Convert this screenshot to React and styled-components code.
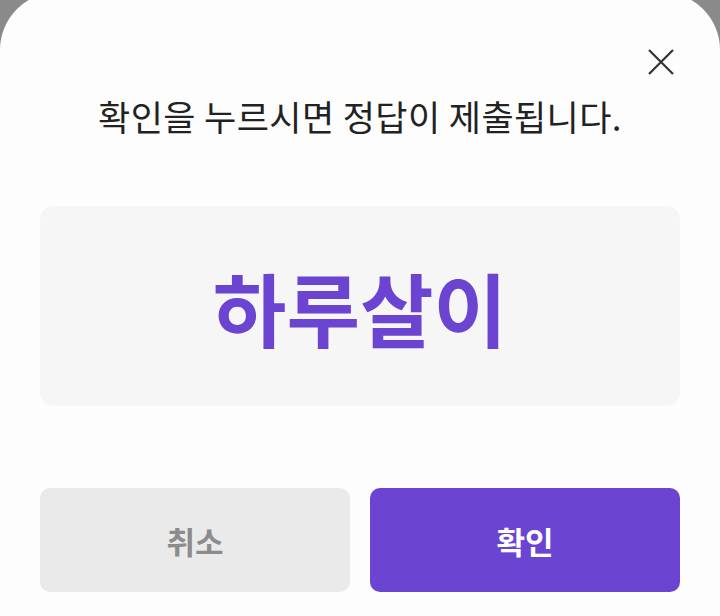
import styled, {createGlobalStyle} from 'styled-components'

const GlobalStyle = createGlobalStyle`
  html, body {
    margin: 0;
    padding: 0;
    background: #8a8a8a;
    overflow: hidden;
  }
  * { box-sizing: border-box; }
`;

const Sheet = styled.div`
  margin-top: -8px;
  min-height: calc(100vh + 8px);
  background: #fdfdfd;
  border-radius: 58px 58px 0 0;
  padding: 57px 40px 24px;
  display: flex;
  flex-direction: column;
  font-family: "Noto Sans CJK KR", "Noto Sans", sans-serif;
`;

const TopBar = styled.div`
  display: flex;
  justify-content: flex-end;
  padding-right: 6px;
  height: 26px;
`;

const CloseButton = styled.button`
  width: 26px;
  height: 26px;
  padding: 0;
  border: 0;
  background: none;
  cursor: pointer;
  display: flex;
`;

const Title = styled.p`
  margin: 18px 0 0;
  text-align: center;
  font-size: 35px;
  line-height: 45px;
  letter-spacing: 0.4px;
  color: #222;
  font-weight: 400;
`;

const AnswerBox = styled.div`
  margin-top: 68px;
  height: 200px;
  border-radius: 14px;
  background: #f6f6f6;
  display: flex;
  align-items: center;
  justify-content: center;
`;

const Answer = styled.span`
  font-size: 80px;
  line-height: 1;
  font-weight: 700;
  color: #6b45d2;
`;

const Buttons = styled.div`
  margin-top: 82px;
  display: grid;
  grid-template-columns: 1fr 1fr;
  gap: 20px;
`;

const Button = styled.button`
  height: 104px;
  border: 0;
  border-radius: 10px;
  font-family: inherit;
  font-size: 31px;
  font-weight: 700;
  background: ${p => p.primary ? '#6b45d2' : '#eaeaea'};
  color: ${p => p.primary ? '#fff' : '#8c8c8c'};
  cursor: pointer;
`;

export default function App() {
  return (
    <>
      <GlobalStyle />
      <Sheet>
        <TopBar>
          <CloseButton aria-label="닫기">
            <svg width="26" height="26" viewBox="0 0 26 26">
              <path d="M1 1L25 25M25 1L1 25" stroke="#333" strokeWidth="2.2" />
            </svg>
          </CloseButton>
        </TopBar>
        <Title>확인을 누르시면 정답이 제출됩니다.</Title>
        <AnswerBox>
          <Answer>하루살이</Answer>
        </AnswerBox>
        <Buttons>
          <Button>취소</Button>
          <Button primary>확인</Button>
        </Buttons>
      </Sheet>
    </>
  )
}
